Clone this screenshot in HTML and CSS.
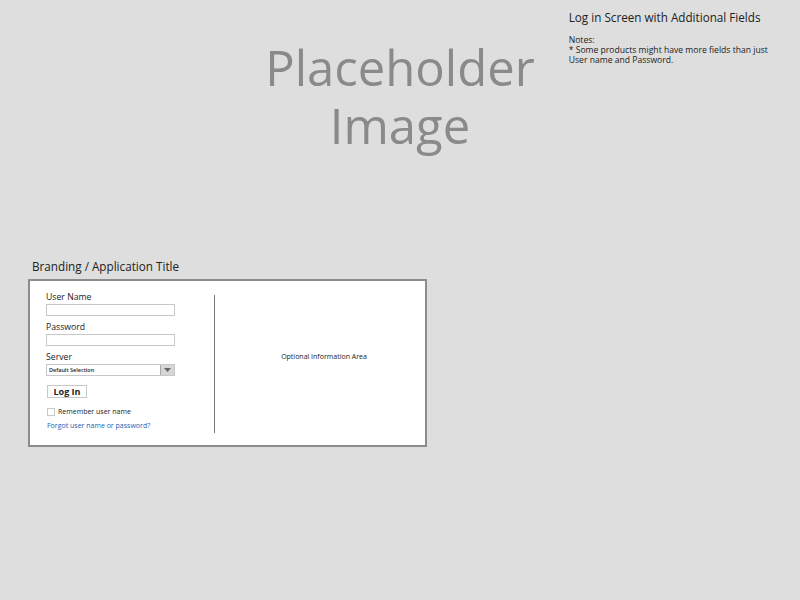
FILE: index.html
```html
<!DOCTYPE html>
<html>
<head>
<meta charset="utf-8">
<link rel="stylesheet" href="styles.css">
</head>
<body>
<div class="top">
  <div class="spacer"></div>
  <div class="placeholder">Placeholder<br>Image</div>
  <div class="notes">
    <div class="notes-title">Log in Screen with Additional Fields</div>
    <div class="notes-body">Notes:<br>* Some products might have more fields than just User name and Password.</div>
  </div>
</div>
<div class="login-area">
  <div class="brand">Branding / Application Title</div>
  <div class="panel">
    <div class="form">
      <label class="lbl">User Name</label>
      <div class="input"></div>
      <label class="lbl">Password</label>
      <div class="input"></div>
      <label class="lbl">Server</label>
      <div class="select"><span class="select-text">Default Selection</span><span class="select-btn"><svg width="7" height="4" viewBox="0 0 7 4"><path d="M0 0h7L3.5 4z" fill="#666"/></svg></span></div>
      <div class="btn">Log In</div>
      <div class="remember"><span class="check"></span>Remember user name</div>
      <a class="forgot">Forgot user name or password?</a>
    </div>
    <div class="divider"></div>
    <div class="info">Optional Information Area</div>
  </div>
</div>
</body>
</html>
```
FILE: styles.css
```css
html, body { margin: 0; padding: 0; }
body {
  background: #dedede;
  font-family: "Open Sans", "Liberation Sans", sans-serif;
  color: #222;
  width: 800px;
  height: 600px;
}
.top {
  display: grid;
  grid-template-columns: 1fr auto 1fr;
  height: 258px;
}
.placeholder {
  font-size: 49px;
  line-height: 58px;
  color: #8a8a8a;
  text-align: center;
  padding-top: 38px;
}
.notes {
  padding-left: 34px;
  padding-top: 9px;
}
.notes-title { font-size: 11.7px; line-height: 16px; }
.notes-body { font-size: 8.6px; line-height: 10px; margin-top: 10px; width: 210px; }
.login-area { padding-left: 28px; }
.brand { font-size: 11.7px; line-height: 16px; padding-left: 4px; height: 21px; }
.panel {
  width: 395px;
  height: 164px;
  background: #fff;
  border: 2px solid #8c8c8c;
  display: flex;
}
.form {
  width: 168px;
  padding: 11px 0 0 16px;
  display: flex;
  flex-direction: column;
  align-items: flex-start;
}
.lbl { font-size: 8.7px; line-height: 11px; height: 12px; }
.input {
  width: 127px; height: 10px;
  border: 1px solid #c8c8c8;
  margin-bottom: 6px;
}
.select {
  width: 127px; height: 10px;
  border: 1px solid #c8c8c8;
  display: flex;
  margin-bottom: 9px;
}
.select-text { flex: 1; font-size: 5.5px; font-weight: 600; line-height: 10px; padding-left: 2px; }
.select-btn { width: 13px; background: #d6d6d6; border-left: 1px solid #aaa; display: flex; align-items: center; justify-content: center; }
.btn {
  width: 38px; height: 11px;
  border: 1px solid #c8c8c8;
  font-size: 9px; font-weight: bold; line-height: 11px; text-align: center;
  margin-left: 1px;
  margin-bottom: 9px;
}
.remember { font-size: 7px; line-height: 9px; display: flex; align-items: center; margin-bottom: 5px; margin-left: 1px; }
.check { width: 6px; height: 6px; border: 1px solid #c8c8c8; margin-right: 3px; }
.forgot { font-size: 7px; line-height: 10px; color: #1a5fb4; padding-left: 1px; }
.divider { width: 1px; background: #777; margin: 14px 0 12px 0; }
.info { flex: 1; display: flex; align-items: center; justify-content: center; font-size: 7px; padding-bottom: 14px; padding-left: 8px; }
```
